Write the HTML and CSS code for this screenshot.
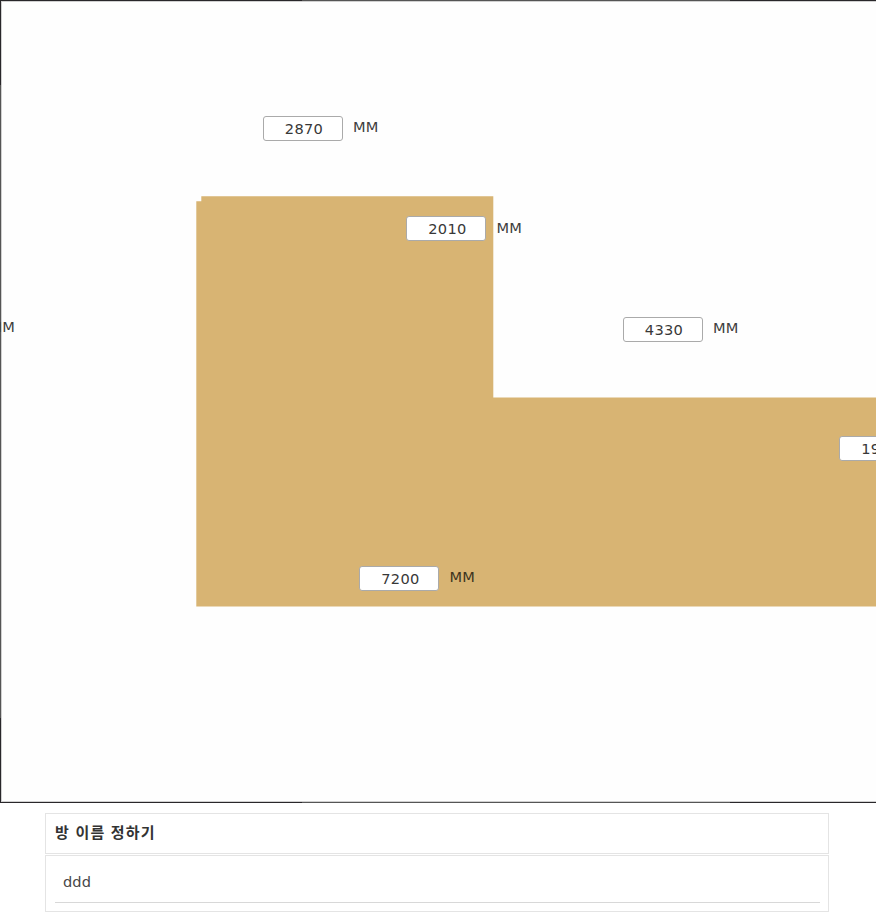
FILE: index.html
```html
<!DOCTYPE html>
<html lang="ko">
<head>
<meta charset="utf-8">
<title>방 이름 정하기</title>
<link rel="stylesheet" href="styles.css">
</head>
<body>
<main class="page">
  <section class="plan">
    <svg class="room" width="876" height="803" viewBox="0 0 876 803">
      <path d="M201.3 196.3H493.3V397.6H876V606.4H196.3V201.3H201.3Z"/>
    </svg>
    <svg class="frame" width="876" height="803" viewBox="0 0 876 803">
      <path class="edge-soft" d="M0 1.5H876M1.5 1V802M0 801.5H876"/>
      <path class="edge-mid" d="M302 .5H730M.5 85V718M302 802.5H730"/>
      <path class="edge-dark" d="M0 .5H302M730 .5H876M.5 0V85M.5 718V803M0 802.5H302M730 802.5H876"/>
    </svg>
    <span class="unit left-unit">MM</span>
    <div class="measure top"><input class="length" value="2870"><span class="unit">MM</span></div>
    <div class="measure step"><input class="length" value="2010"><span class="unit">MM</span></div>
    <div class="measure ledge"><input class="length" value="4330"><span class="unit">MM</span></div>
    <div class="measure right"><input class="length" value="1990"><span class="unit">MM</span></div>
    <div class="measure bottom"><input class="length" value="7200"><span class="unit">MM</span></div>
  </section>
  <section class="naming">
    <h2 class="heading">방 이름 정하기</h2>
    <div class="field"><input class="name" value="ddd"></div>
  </section>
</main>
</body>
</html>
```
FILE: styles.css
```css
* { box-sizing: border-box; }
body {
  margin: 0;
  background: #fff;
  color: #333;
  font: 14.6px/20px "DejaVu Sans", "Noto Sans CJK KR", sans-serif;
}
.page { height: 917px; overflow: hidden; }
.plan {
  position: relative;
  height: 803px;
  overflow: hidden;
  background: #fefefe;
}
.room, .frame { position: absolute; left: 0; top: 0; }
.room { fill: #d8b473; }
.frame { fill: none; }
.edge-soft { stroke: #d0d0d0; }
.edge-mid { stroke: #555; }
.edge-dark { stroke: #29272a; }
.measure {
  position: absolute;
  display: flex;
  align-items: flex-start;
  gap: 10px;
}
.length {
  width: 80px;
  height: 25px;
  padding: 0 0 1px 2px;
  border: 1px solid #aaa;
  border-radius: 3px;
  background: #fff;
  color: #383838;
  font: inherit;
  letter-spacing: .3px;
  text-align: center;
}
.unit { padding-top: 1px; color: #404040; letter-spacing: .2px; }
.top { left: 263px; top: 116px; }
.step { left: 406.4px; top: 216.4px; }
.ledge { left: 623px; top: 317px; }
.right { left: 839.4px; top: 436px; }
.bottom { left: 359.4px; top: 566px; }
.step .unit { padding-top: 2px; }
.left-unit { position: absolute; left: -10.5px; top: 316px; }
.bottom .unit { color: #40361f; }
.naming {
  display: flex;
  flex-direction: column;
  gap: 1px;
  width: 784px;
  margin: 10px 0 0 45px;
}
.heading {
  height: 41px;
  margin: 0;
  padding: 0 9px;
  border: 1px solid #e4e4e4;
  color: #333;
  font: bold 15px/35px "Noto Sans CJK KR", sans-serif;
  letter-spacing: 1.2px;
}
.field {
  height: 57px;
  padding: 6px 8px 8px 9px;
  border: 1px solid #e4e4e4;
}
.name {
  display: block;
  width: 100%;
  height: 41px;
  padding: 0 8px 1px;
  border: 0;
  border-bottom: 1px solid #d8d8d8;
  background: transparent;
  color: #484848;
  font: inherit;
  letter-spacing: .1px;
}
```
